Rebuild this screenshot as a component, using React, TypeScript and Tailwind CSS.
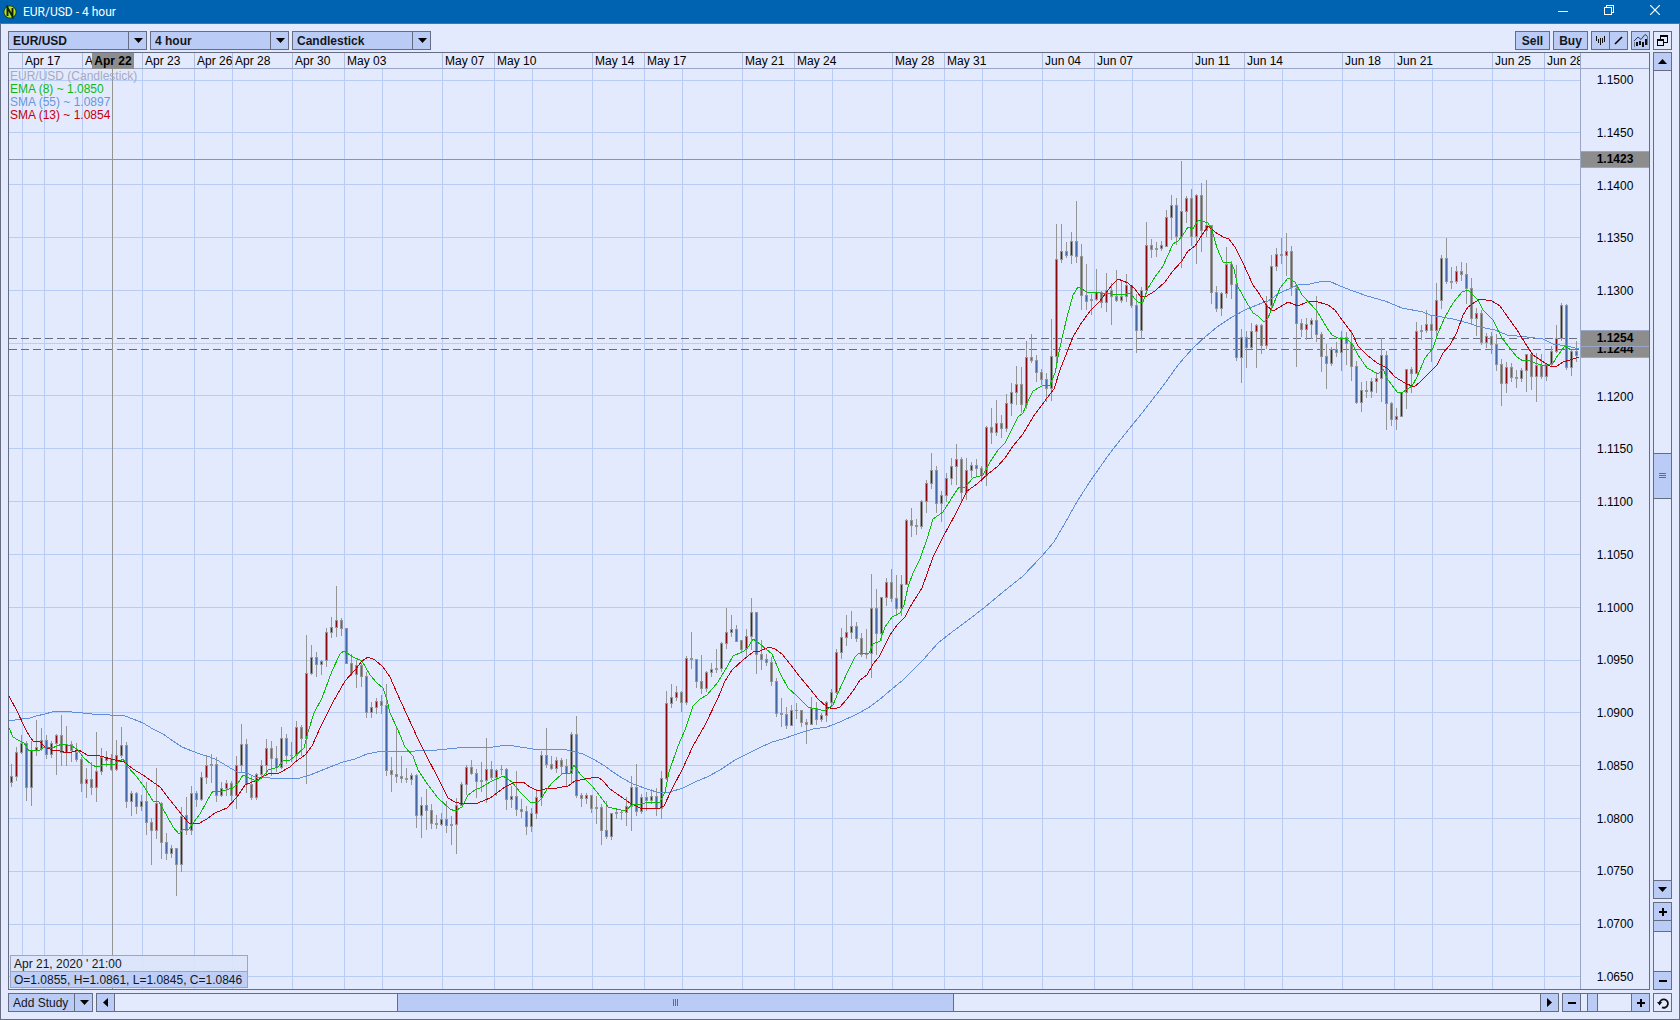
import React from "react";

/* ---------- chart data (chart canvas units) ---------- */

// Each candle: high, body top, body bottom, low, colour (r = rising, b = falling)
const CANDLES = `764 776 782 786 r;747 752 776 780 r;735 743 752 753 r;741 743 787 800 b;741 750 787 805 r;720 747 750 755 r;728 740 748 750 r;735 740 754 758 b;741 743 754 757 r;734 735 743 774 r;
715 735 752 765 b;726 744 752 765 r;741 744 750 761 b;743 752 759 761 b;757 759 783 791 b;768 779 783 797 r;762 779 787 794 b;732 771 787 801 r;748 757 771 774 r;751 757 760 766 r;
754 759 769 770 b;740 755 769 770 r;727 745 755 757 r;742 745 801 807 b;791 793 801 815 r;792 793 806 813 b;795 801 806 810 r;782 801 822 834 b;818 822 830 864 b;768 803 830 838 r;
802 803 842 858 b;833 842 853 859 b;845 848 853 857 r;848 848 864 895 b;807 816 864 871 r;797 815 830 834 b;786 793 830 834 r;791 793 799 806 b;772 777 799 800 r;755 765 777 783 r;
754 764 765 782 b;757 764 795 801 b;782 788 795 796 r;780 783 788 795 r;781 783 795 800 b;756 765 795 808 r;724 744 765 771 r;739 744 784 792 b;776 784 797 799 b;773 774 797 799 r;
760 765 774 777 r;739 748 765 775 r;741 748 758 775 b;746 758 767 771 b;727 738 767 768 r;734 738 755 763 b;742 755 755 761 b;721 727 755 761 r;725 727 738 755 b;635 673 738 783 r;
645 657 673 674 r;652 657 664 676 b;660 661 664 674 r;628 632 660 666 r;617 627 632 637 r;586 620 627 636 r;618 620 628 635 b;628 628 663 663 b;654 663 673 675 b;660 665 674 687 r;
663 665 676 686 b;672 676 712 717 b;702 707 712 717 r;698 701 707 713 r;695 701 705 713 b;684 705 770 775 b;757 770 774 791 b;726 774 776 782 b;756 776 778 782 b;768 778 779 782 b;
773 775 779 784 r;774 775 815 827 b;797 805 815 837 r;789 805 810 829 b;804 810 823 828 b;815 823 824 828 b;813 819 824 825 r;801 819 825 832 b;816 824 825 844 b;798 805 824 853 r;
782 784 805 805 r;765 767 784 794 r;760 767 773 774 b;769 773 781 797 b;762 780 781 791 b;738 769 780 802 r;761 769 777 779 b;769 770 777 795 r;765 769 769 774 b;768 769 799 809 b;
786 796 799 807 r;771 796 809 815 b;799 809 811 817 b;806 811 826 834 b;808 813 826 831 r;789 797 813 818 r;751 755 797 805 r;728 755 764 767 b;756 764 768 769 b;757 760 768 772 r;
758 760 766 773 b;759 766 773 785 b;732 734 773 783 r;716 734 795 797 b;793 795 798 806 b;793 795 798 803 r;795 795 808 812 b;796 807 808 823 b;804 807 830 844 b;801 830 836 838 b;
813 813 836 839 r;809 812 813 818 r;810 812 812 819 b;797 806 812 825 r;776 787 806 830 r;764 787 811 815 b;794 797 811 813 r;792 797 800 810 b;789 796 800 803 r;788 796 808 815 b;
771 778 808 818 r;691 703 778 779 r;684 697 703 707 r;686 692 697 700 r;691 692 702 711 b;656 658 702 704 r;632 658 659 668 b;659 659 681 687 b;655 681 688 693 b;671 672 688 691 r;
663 669 672 676 r;649 668 669 672 r;642 643 668 671 r;608 632 643 648 r;615 629 632 636 r;625 629 641 641 b;640 640 649 652 b;629 636 648 656 r;598 612 636 649 r;612 612 654 673 b;
640 654 659 669 b;654 659 662 665 b;657 662 681 685 b;678 681 713 716 b;698 713 714 726 b;707 714 725 728 b;705 710 725 725 r;703 710 710 718 b;710 710 722 726 b;719 722 724 743 b;
697 708 724 724 r;702 708 719 724 b;713 715 719 721 r;701 702 715 721 r;689 692 702 704 r;649 652 692 693 r;628 637 652 658 r;615 632 637 645 r;611 626 632 638 r;622 626 638 641 b;
633 638 654 656 b;629 654 654 658 b;574 608 653 677 r;589 608 633 654 b;597 597 633 640 r;578 582 597 605 r;569 582 598 601 b;575 598 608 615 b;575 584 608 615 r;519 520 584 584 r;
508 520 525 536 b;519 525 526 534 b;500 501 526 528 r;480 483 501 512 r;453 470 483 488 r;466 470 503 512 b;491 495 503 521 r;473 478 495 501 r;458 466 478 484 r;444 459 466 484 r;
457 459 492 502 b;458 470 492 499 r;462 465 470 477 r;459 465 468 476 b;466 468 475 481 b;426 427 475 485 r;408 427 432 443 b;400 423 432 435 r;415 423 428 437 b;394 403 428 431 r;
383 392 403 415 r;366 384 392 404 r;367 384 404 412 b;341 357 404 408 r;334 357 360 362 b;355 360 372 381 b;369 372 379 384 b;373 379 388 401 b;319 356 388 400 r;224 259 356 368 r;
224 251 259 262 r;242 251 255 257 b;232 241 255 263 r;201 241 256 262 b;244 256 295 309 b;264 295 301 309 b;294 299 300 314 b;269 292 299 300 r;291 292 302 307 b;273 290 302 311 r;
283 290 296 324 b;270 296 300 301 b;281 296 300 302 r;274 285 296 301 r;285 285 305 307 b;294 305 330 352 b;287 290 330 338 r;222 245 290 290 r;239 245 249 257 b;242 248 249 256 b;
241 245 248 250 r;210 217 246 246 r;195 205 217 239 r;198 205 236 244 b;161 211 236 267 r;196 198 211 222 r;189 198 236 245 b;194 195 236 263 r;183 195 230 251 b;180 225 230 236 r;
225 225 292 303 b;286 292 308 311 b;292 293 308 315 r;247 264 293 297 r;261 264 284 298 b;265 284 357 360 b;329 337 357 382 r;331 337 347 367 b;323 331 347 348 r;324 325 331 367 r;
324 325 345 353 b;296 305 345 348 r;255 266 305 309 r;248 254 266 270 r;238 254 255 263 b;233 251 255 275 r;246 251 287 295 b;286 288 323 366 b;319 323 329 336 b;318 324 329 339 r;
318 320 324 338 r;296 320 334 341 b;332 334 356 371 b;344 356 363 388 b;347 349 363 365 r;342 349 352 356 b;331 337 352 370 r;332 337 343 364 b;330 343 366 380 b;361 366 402 403 b;
382 390 402 411 r;381 390 391 397 b;378 381 391 397 r;372 378 381 392 r;338 355 378 401 r;351 355 403 429 b;402 403 419 425 b;408 416 419 429 r;392 392 416 416 r;369 369 392 408 r;
367 369 373 392 b;322 331 373 373 r;325 330 331 339 r;310 324 330 332 r;315 324 330 361 b;283 300 330 336 r;255 258 300 308 r;238 258 281 283 b;267 281 282 288 b;266 271 281 283 r;
262 271 274 280 b;263 274 288 303 b;278 288 318 323 b;308 313 318 335 r;310 313 342 344 b;333 336 342 347 r;332 336 344 353 b;334 344 364 370 b;359 364 383 405 b;362 367 383 392 r;
363 367 377 381 b;370 377 378 387 b;368 370 378 381 r;354 354 370 391 r;354 354 376 389 b;353 365 376 401 r;354 365 376 378 b;363 364 376 380 r;346 351 364 365 r;325 338 351 352 r;
303 305 338 340 r;304 305 367 369 b;350 351 367 375 r;341 351 355 361 b`
  .split(";")
  .map((row) => {
    const [high, top, bottom, low, tone] = row.trim().split(" ");
    return { high: +high, top: +top, bottom: +bottom, low: +low, rising: tone === "r" };
  });

const SMA_55 =
  "9,721 21,719 30,718 36,716 45,714 52,712 57,711 65,711 72,712 83,713 92,714 110,715 125,716 133,719 143,723 153,729 163,734 173,741 182,747 192,751 200,754 210,757 217,760 227,766 237,772 247,773 255,777 263,777 277,779 287,778 300,778 310,775 320,771 330,767 343,762 355,759 367,754 382,751 387,751 400,751 415,751 437,750 457,748 468,747 493,747 507,745 520,747 533,749 567,750 575,752 583,754 593,759 605,766 613,772 622,778 633,784 647,789 660,793 670,792 683,788 695,782 707,777 720,770 735,760 747,754 757,749 772,742 783,739 797,734 813,729 827,727 840,722 857,714 868,708 879,700 892,689 903,680 923,660 938,643 952,632 967,621 985,607 1003,592 1023,576 1042,556 1054,542 1065,523 1078,500 1093,477 1110,453 1121,439 1142,413 1163,386 1178,365 1193,348 1205,337 1217,327 1232,317 1247,309 1262,303 1268,301 1278,294 1293,287 1298,285 1310,284 1323,281 1329,281 1340,286 1353,291 1367,296 1385,301 1402,308 1423,312 1430,315 1453,319 1468,323 1480,327 1495,330 1507,335 1527,337 1543,339 1553,344 1567,346 1575,348 1579,348";

const SMA_13 =
  "9,696 17,711 25,728 30,737 33,741 40,742 45,747 52,750 60,751 67,753 72,752 79,750 87,755 100,756 115,760 124,762 133,769 143,775 160,787 170,800 182,815 189,823 198,824 207,819 215,813 227,808 237,797 245,785 257,780 268,774 279,773 290,767 295,762 305,755 312,746 320,728 333,702 345,681 355,670 362,661 368,657 375,660 383,667 390,677 397,693 407,715 418,739 425,753 438,778 448,798 455,802 463,804 478,803 490,798 505,787 513,783 523,782 530,787 538,791 545,789 557,788 568,786 575,781 585,779 598,777 603,781 610,789 620,796 630,803 640,808 660,808 664,806 672,789 683,768 693,746 705,725 718,698 725,681 732,670 743,660 753,652 760,651 769,647 775,649 782,654 790,664 800,677 810,689 818,699 827,707 834,709 840,707 847,699 855,688 860,680 867,675 873,664 879,657 890,635 897,625 905,617 910,607 922,588 933,557 943,537 955,515 967,491 977,484 988,474 998,466 1005,458 1013,446 1023,434 1033,417 1047,398 1054,389 1060,370 1073,337 1080,325 1090,311 1100,301 1112,285 1118,279 1128,283 1135,289 1140,296 1145,297 1155,291 1165,282 1172,272 1182,261 1188,251 1195,246 1202,235 1208,226 1215,232 1223,237 1229,239 1235,247 1243,263 1253,285 1258,292 1267,306 1273,311 1280,307 1288,302 1298,306 1307,302 1315,301 1328,305 1335,310 1342,320 1352,333 1358,346 1367,355 1377,363 1387,368 1395,377 1405,383 1414,387 1420,382 1432,370 1437,365 1443,353 1450,345 1457,332 1463,315 1468,307 1475,302 1480,299 1492,301 1500,306 1507,316 1517,330 1527,346 1533,355 1542,361 1550,366 1557,366 1563,362 1570,360 1579,357";

const EMA_8 =
  "9,728 13,737 18,740 24,743 29,751 40,750 45,747 52,748 62,744 72,746 78,750 83,757 92,765 97,767 105,764 115,764 123,759 128,767 137,777 145,788 153,801 159,802 167,816 173,827 179,834 183,829 189,829 193,823 200,814 207,801 213,791 222,791 233,788 238,783 243,775 249,778 257,781 263,777 268,770 278,767 283,761 290,760 295,756 304,748 308,732 314,713 322,698 332,671 340,654 344,651 353,657 362,661 370,675 377,683 383,688 387,700 390,713 398,730 405,747 413,756 418,770 428,785 438,798 450,809 455,811 462,807 468,795 475,790 482,787 490,782 503,776 512,782 520,792 530,802 537,803 542,798 547,789 553,782 562,774 570,773 574,765 580,774 592,786 600,796 608,807 625,811 633,804 638,805 648,802 660,802 665,792 669,772 678,746 685,730 693,706 700,699 707,695 718,682 727,667 733,656 742,652 747,649 753,639 760,644 772,654 780,673 788,688 797,696 808,707 825,711 833,705 838,693 847,673 855,657 858,654 869,653 873,644 880,641 885,627 892,617 900,613 904,605 908,587 913,573 920,559 927,539 933,519 943,512 953,496 959,487 965,487 973,478 983,475 990,462 998,450 1005,443 1018,417 1023,413 1027,403 1033,391 1042,386 1050,385 1055,373 1060,347 1067,317 1073,295 1078,287 1087,292 1100,293 1112,294 1123,295 1130,293 1135,299 1139,303 1143,302 1148,288 1155,277 1163,266 1173,244 1178,241 1183,235 1188,227 1193,229 1198,220 1208,223 1212,230 1217,248 1223,262 1231,263 1234,269 1238,287 1247,303 1253,313 1258,316 1264,322 1268,318 1272,308 1280,288 1288,278 1295,282 1302,295 1317,311 1327,328 1332,335 1338,338 1347,339 1353,345 1358,355 1367,368 1378,374 1383,369 1388,380 1398,393 1403,392 1412,386 1417,377 1425,358 1433,348 1438,333 1445,317 1453,303 1462,292 1468,290 1473,295 1478,300 1483,310 1493,320 1502,338 1508,346 1517,357 1523,361 1528,360 1535,363 1545,366 1553,363 1558,355 1565,346 1570,349 1579,350";

const GRID_X = [
  22, 44, 82, 142, 194, 232, 292, 344, 382, 442, 494, 532, 592, 644, 682, 742, 794, 832, 892, 944, 982, 1042, 1094,
  1132, 1192, 1244, 1282, 1342, 1394, 1432, 1492, 1544,
];
const GRID_Y = [80, 132, 184, 237, 290, 343, 395, 448, 501, 554, 607, 660, 712, 765, 818, 871, 924, 976];

// Date label and the share of the time axis it takes
const DATES: [string, number][] = [
  ["Apr 17", 60], ["A", 60], ["Apr 23", 52], ["Apr 26", 38], ["Apr 28", 60], ["Apr 30", 52], ["May 03", 98],
  ["May 07", 52], ["May 10", 98], ["May 14", 52], ["May 17", 98], ["May 21", 52], ["May 24", 98], ["May 28", 52],
  ["May 31", 98], ["Jun 04", 52], ["Jun 07", 98], ["Jun 11", 52], ["Jun 14", 98], ["Jun 18", 52], ["Jun 21", 98],
  ["Jun 25", 52], ["Jun 28", 36],
];
const DATE_COLUMNS = "minmax(0,13fr) " + DATES.map(([, w]) => `minmax(0,${w}fr)`).join(" ");

const PRICES = Array.from({ length: 18 }, (_, i) => (1.15 - i * 0.005).toFixed(4));
// This step lies behind the bid and ask tags
const COVERED = "1.1250";

// Marked prices and their height on the chart canvas
const TAGS = [
  { price: "1.1423", y: 159 },
  { price: "1.1244", y: 349 },
  { price: "1.1254", y: 338 },
];

const LEGEND = [
  { text: "EUR/USD (Candlestick)", tone: "text-[#a3abc4]" },
  { text: "EMA (8) ~ 1.0850", tone: "text-[#12b812]" },
  { text: "SMA (55) ~ 1.0897", tone: "text-[#6a97dc]" },
  { text: "SMA (13) ~ 1.0854", tone: "text-[#c4000e]" },
];

/* ---------- small parts ---------- */

type Dir = "up" | "down" | "left" | "right";
const ARROWS: Record<Dir, string> = {
  down: "M0 2h9L4.500 7z",
  up: "M0 7h9L4.500 2z",
  left: "M7 0v9L2 4.500z",
  right: "M2 0v9L7 4.500z",
};

function Arrow({ dir }: { dir: Dir }) {
  return (
    <svg viewBox="0 0 9 9" className="block h-[9px] w-[9px] fill-black" aria-hidden="true">
      <path d={ARROWS[dir]} />
    </svg>
  );
}

function Sign({ plus = false }: { plus?: boolean }) {
  return (
    <svg viewBox="0 0 8 8" className="block h-2 w-2 fill-black" shapeRendering="crispEdges" aria-hidden="true">
      <path d={plus ? "M0 3h8v2H0zM3 0h2v8H3z" : "M0 3h8v2H0z"} />
    </svg>
  );
}

function Combo({ label, options }: { label: string; options: string[] }) {
  return (
    <div className="relative h-[19px] w-[139px] border border-[#666c82] bg-[#bacbf5]">
      <select
        aria-label={label}
        className="block h-full w-full appearance-none bg-transparent pl-1 pr-5 text-xs leading-4 font-bold text-[#15161c] outline-none"
      >
        {options.map((o) => (
          <option key={o}>{o}</option>
        ))}
      </select>
      <span className="pointer-events-none absolute inset-y-0 right-0 flex w-[18px] items-center justify-end border-l border-[#666c82] pr-[3px]">
        <Arrow dir="down" />
      </span>
    </div>
  );
}

const acrossButton = "h-full w-[18px]";
const downButton = "h-[18px] w-full";

function BarButton({ label, className, children }: { label: string; className: string; children: React.ReactNode }) {
  return (
    <button
      type="button"
      aria-label={label}
      className={`flex shrink-0 items-center justify-center border-[#666c82] bg-[#bacbf5] ${className}`}
    >
      {children}
    </button>
  );
}

function TitleBar() {
  return (
    <header className="flex h-[23px] shrink-0 items-center bg-[#0063b1] pr-0.5 text-white">
      <svg viewBox="0 0 14 14" className="ml-[3px] h-[14px] w-[14px]" aria-hidden="true">
        <circle cx="7" cy="7" r="6.500" fill="#17301a" />
        <circle cx="7" cy="7" r="5.700" fill="#b5e61d" />
        <path d="M4.500 11V2.500L9.500 11.500V3" fill="none" stroke="#10200e" strokeWidth="1.900" />
      </svg>
      <h1 className="ml-1.5 font-[Roboto,sans-serif] text-xs leading-4">EUR/USD - 4 hour</h1>
      <div className="ml-auto flex h-full items-center">
        <button type="button" aria-label="Minimize" className="flex h-full w-[46px] items-center justify-center">
          <svg viewBox="0 0 10 10" className="mb-1 h-[10px] w-[10px]" shapeRendering="crispEdges">
            <path d="M0 6h10v1H0z" fill="#fff" />
          </svg>
        </button>
        <button type="button" aria-label="Restore" className="flex h-full w-[46px] items-center justify-center">
          <svg viewBox="0 0 10 10" className="mb-1 h-[10px] w-[10px]" fill="none" stroke="#fff" shapeRendering="crispEdges">
            <path d="M.5 2.500h7v7h-7zM2.500 2.500v-2h7v7h-2" />
          </svg>
        </button>
        <button type="button" aria-label="Close" className="flex h-full w-[46px] items-center justify-center">
          <svg viewBox="0 0 10 10" className="mb-1 h-[10px] w-[10px]" fill="none" stroke="#fff" strokeWidth="1.200">
            <path d="M0 0l10 10M10 0L0 10" />
          </svg>
        </button>
      </div>
    </header>
  );
}

function Toolbar() {
  const text = "h-[19px] w-[35px] border border-[#666c82] bg-[#bacbf5] text-xs leading-4 font-bold text-[#15161c]";
  return (
    <div className="flex gap-[3px]">
      <Combo label="Instrument" options={["EUR/USD", "GBP/USD", "USD/JPY"]} />
      <Combo label="Interval" options={["4 hour", "1 hour", "1 day"]} />
      <Combo label="Chart type" options={["Candlestick", "Bar", "Line"]} />
      <button type="button" className={`ml-auto ${text}`}>Sell</button>
      <button type="button" className={text}>Buy</button>
      <div className="flex h-[19px] w-[37px] border border-[#666c82] bg-[#bacbf5]">
        <button type="button" aria-label="Bars" className="flex flex-1 items-center justify-center border-r border-[#666c82]">
          <svg viewBox="0 0 11 11" className="h-[11px] w-[11px]" stroke="#111" shapeRendering="crispEdges">
            <path d="M1.500 1v5M3.500 4v4M5.500 3v7M7.500 3v5M9.500 1v6" />
          </svg>
        </button>
        <button type="button" aria-label="Draw line" className="flex flex-1 items-center justify-center">
          <svg viewBox="0 0 9 9" className="h-[9px] w-[9px]" stroke="#000" strokeWidth="1.600">
            <path d="M1 8l7-7" />
          </svg>
        </button>
      </div>
      <button type="button" aria-label="Studies" className="flex h-[19px] w-[19px] items-center justify-center border border-[#666c82] bg-[#bacbf5]">
        <svg viewBox="0 0 15 15" className="h-[15px] w-[15px]" fill="none">
          <path d="M3 9h2v4H3zM6 8h2v4H6zM9 9h2v5H9zM12 6h2v6h-2z" fill="#111" />
          <path d="M1 8l4-4 3 2.500L12 1.500 14 3" stroke="#333b52" />
          <path d="M1.500 9v5M14.500 3v9" stroke="#6b7590" />
        </svg>
      </button>
      <button type="button" aria-label="Detach window" className="flex h-[19px] w-[19px] items-center justify-center border border-[#666c82]">
        <svg viewBox="0 0 11 11" className="h-[11px] w-[11px]" shapeRendering="crispEdges">
          <path d="M3 0h8v8H3z" fill="#000" />
          <path d="M4 2h6v5H4z" fill="#e3eafd" />
          <path d="M0 4h7v7H0z" fill="#000" />
          <path d="M1 6h5v4H1z" fill="#e3eafd" />
        </svg>
      </button>
    </div>
  );
}

function Plot() {
  return (
    <svg
      viewBox="9 69 1571 920"
      preserveAspectRatio="none"
      className="absolute inset-0 h-full w-full"
      shapeRendering="crispEdges"
      role="img"
      aria-label="EUR/USD candlestick chart"
    >
      <g fill="#b9ccf6">
        {GRID_X.map((x) => (
          <rect key={x} x={x} y="69" width="1" height="920" />
        ))}
        {GRID_Y.map((y) => (
          <rect key={y} x="9" y={y} width="1571" height="1" />
        ))}
      </g>
      <g stroke="#666c82" strokeDasharray="8 4">
        <path d="M9 338.500H1580" />
        <path d="M9 349.500H1580" />
      </g>
      <g fill="#949494">
        <rect x="9" y="159" width="1571" height="1" />
        <rect x="112" y="69" width="1" height="920" />
      </g>
      {CANDLES.map((c, i) => {
        const x = 11 + i * 5;
        const h = Math.max(1, c.bottom - c.top + 1);
        return (
          <g key={i} fill="#959595">
            <rect x={x} y={c.high} width="1" height={c.low - c.high + 1} />
            <rect x={x - 1} y={c.top} width="3" height={h} />
            {h > 2 && (
              <rect x={x} y={c.top + 1} width="1" height={h - 2} fill={c.rising ? "#8a0a0a" : "#4468a8"} />
            )}
          </g>
        );
      })}
      <g fill="none">
        <polyline points={SMA_55} stroke="#5f8fdb" />
        <polyline points={SMA_13} stroke="#bf0008" />
        <polyline points={EMA_8} stroke="#08bc08" />
      </g>
    </svg>
  );
}

function Chart() {
  return (
    <main className="flex min-w-0 flex-1 border border-[#666c82] text-xs leading-4">
      <div className="flex min-w-0 flex-1 flex-col">
        <div className="relative h-4 shrink-0 border-b border-[#9aa6c8]">
          <div className="grid h-full" style={{ gridTemplateColumns: DATE_COLUMNS }}>
            <span />
            {DATES.map(([d]) => (
              <span key={d} className="overflow-hidden border-l border-[#b0bcdc] pl-0.5 whitespace-nowrap text-black">
                {d}
              </span>
            ))}
          </div>
          <span className="absolute top-0 left-[83px] h-4 w-[42px] bg-[#8d8d8d] text-center font-bold text-black">
            Apr 22
          </span>
        </div>
        <div className="relative flex flex-1 flex-col">
          <Plot />
          <ul className="relative pt-px pl-px leading-[13px]">
            {LEGEND.map((l) => (
              <li key={l.text} className={l.tone}>{l.text}</li>
            ))}
          </ul>
          <div className="relative mt-auto mb-px ml-px w-[238px] border border-[#9aa6c8] whitespace-nowrap text-[#15161c]">
            <p className="h-4 border-b border-[#9aa6c8] bg-[#dbe4fb]/90 pl-[3px]">Apr 21, 2020 ' 21:00</p>
            <p className="h-[15px] bg-[#bacbf5]/90 pl-[3px]">O=1.0855, H=1.0861, L=1.0845, C=1.0846</p>
          </div>
        </div>
      </div>
      <div className="flex w-[69px] shrink-0 flex-col border-l border-[#9aa6c8]">
        <div className="h-4 shrink-0 border-b border-[#9aa6c8]" />
        <div className="relative flex flex-1 flex-col justify-between pt-[3px] pb-1 text-center text-black">
          {PRICES.map((p) => (
            <span key={p} className="h-4">{p === COVERED ? "" : p}</span>
          ))}
          {TAGS.map((t) => (
            <span
              key={t.price}
              className="absolute inset-x-0 -mt-2 h-[17px] border-y border-[#9aa6c8] bg-[#8d8d8d] leading-[15px] font-bold text-black"
              style={{ top: `${((t.y - 69) / 920) * 100}%` }}
            >
              {t.price}
            </span>
          ))}
        </div>
      </div>
    </main>
  );
}

function Sidebar() {
  return (
    <aside className="flex w-[19px] shrink-0 flex-col gap-[3px]">
      <div className="flex flex-1 flex-col border border-[#666c82]">
        <BarButton label="Scroll up" className={`${downButton} border-b`}><Arrow dir="up" /></BarButton>
        <div role="scrollbar" aria-controls="chart" aria-valuenow={50} aria-orientation="vertical" className="flex flex-1 flex-col justify-center">
          <div className="flex h-[46px] items-center justify-center border-y border-[#666c82] bg-[#bacbf5]">
            <span className="h-[5px] w-[7px] border-y border-[#666c82] py-px">
              <span className="block h-px bg-[#666c82]" />
            </span>
          </div>
        </div>
        <BarButton label="Scroll down" className={`${downButton} border-t`}><Arrow dir="down" /></BarButton>
      </div>
      <div className="flex h-[88px] flex-col border border-[#666c82]">
        <BarButton label="Zoom price in" className={`${downButton} border-b`}><Sign plus /></BarButton>
        <input
          type="range"
          aria-label="Price zoom"
          defaultValue={0}
          className="m-0 min-h-0 w-full flex-1 appearance-none bg-transparent [writing-mode:vertical-lr] [&::-webkit-slider-thumb]:h-[11px] [&::-webkit-slider-thumb]:w-[17px] [&::-webkit-slider-thumb]:appearance-none [&::-webkit-slider-thumb]:border-b [&::-webkit-slider-thumb]:border-[#666c82] [&::-webkit-slider-thumb]:bg-[#bacbf5]"
        />
        <BarButton label="Zoom price out" className={`${downButton} border-t`}><Sign /></BarButton>
      </div>
    </aside>
  );
}

function Footer() {
  return (
    <footer className="flex h-[19px] shrink-0 gap-[3px]">
      <button type="button" className="flex w-[85px] shrink-0 items-center border border-[#666c82] bg-[#bacbf5] text-xs leading-4 text-[#15161c]">
        <span className="flex-1 pl-1 text-left whitespace-nowrap">Add Study</span>
        <span className="flex h-full w-[18px] items-center justify-end border-l border-[#666c82] pr-[3px]">
          <Arrow dir="down" />
        </span>
      </button>
      <div className="flex min-w-0 flex-1 border border-[#666c82]">
        <BarButton label="Scroll left" className={`${acrossButton} border-r`}><Arrow dir="left" /></BarButton>
        <div role="scrollbar" aria-controls="chart" aria-valuenow={33} aria-orientation="horizontal" className="flex flex-1">
          <div className="grow-[282] basis-0" />
          <div className="flex grow-[555] basis-0 items-center justify-center border-x border-[#666c82] bg-[#bacbf5]">
            <span className="flex h-[7px] w-[5px] justify-center border-x border-[#666c82]">
              <span className="w-px bg-[#666c82]" />
            </span>
          </div>
          <div className="grow-[586] basis-0" />
        </div>
        <BarButton label="Scroll right" className={`${acrossButton} border-l`}><Arrow dir="right" /></BarButton>
      </div>
      <div className="flex w-[88px] shrink-0 border border-[#666c82]">
        <BarButton label="Zoom time out" className={`${acrossButton} border-r`}><Sign /></BarButton>
        <input
          type="range"
          aria-label="Time zoom"
          defaultValue={15}
          className="m-0 h-full min-w-0 flex-1 appearance-none bg-transparent [&::-webkit-slider-thumb]:h-[17px] [&::-webkit-slider-thumb]:w-[11px] [&::-webkit-slider-thumb]:appearance-none [&::-webkit-slider-thumb]:border-x [&::-webkit-slider-thumb]:border-[#666c82] [&::-webkit-slider-thumb]:bg-[#bacbf5]"
        />
        <BarButton label="Zoom time in" className={`${acrossButton} border-l`}><Sign plus /></BarButton>
      </div>
      <button type="button" aria-label="Reset view" className="flex w-[19px] shrink-0 items-center justify-center border border-[#666c82]">
        <svg viewBox="0 0 12 12" className="h-3 w-3" fill="none" stroke="#111" strokeWidth="1.800">
          <path d="M2.500 6.500A4.200 4.200 0 1 1 5 10.400" />
          <path d="M0 5h5.200L2.600 8.500z" fill="#111" stroke="none" />
        </svg>
      </button>
    </footer>
  );
}

export default function App() {
  return (
    <div className="flex min-h-screen flex-col bg-[#e3eafd] font-['Liberation_Sans',Arial,sans-serif]">
      <TitleBar />
      <div className="flex flex-1 flex-col border border-[#666c82] p-[7px]">
        <Toolbar />
        <div id="chart" className="mt-0.5 mb-[3px] flex flex-1 gap-[3px]">
          <Chart />
          <Sidebar />
        </div>
        <Footer />
      </div>
    </div>
  );
}
